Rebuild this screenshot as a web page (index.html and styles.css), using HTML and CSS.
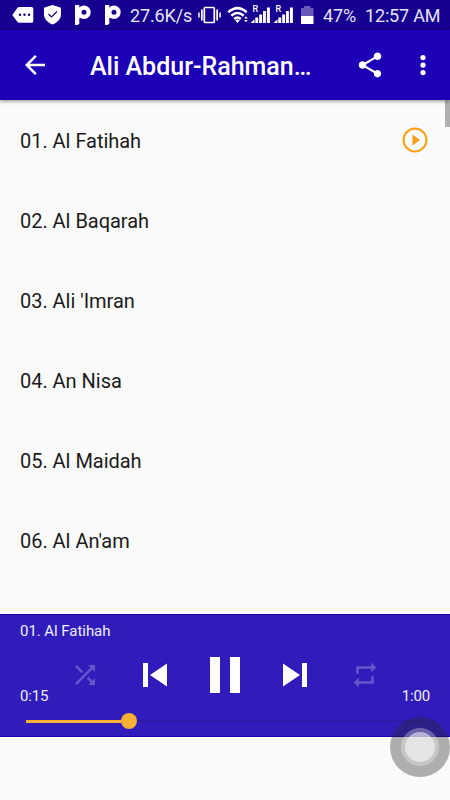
FILE: index.html
```html
<!DOCTYPE html>
<html lang="en">
<head>
<meta charset="utf-8">
<title>Ali Abdur-Rahman</title>
<link rel="stylesheet" href="styles.css">
</head>
<body>
<div class="screen">
  <div class="status">
    <svg class="notices" viewBox="0 0 130 30" fill="#fff">
      <path d="M12.300 15l5-7Q18 7 19.300 7H31.500Q33.300 7 33.300 8.800V20.900Q33.300 22.800 31.500 22.800H19.300Q18 22.800 17.300 21.800z"/>
      <g fill="#16008f"><circle cx="20" cy="14.800" r="1.200"/><circle cx="24.500" cy="14.800" r="1.200"/><circle cx="29" cy="14.800" r="1.200"/></g>
      <path d="M52.500 5l8.500 2.800v6.400c0 4.800-3.500 8.200-8.500 10.200-5-2-8.500-5.400-8.500-10.200V7.800z"/>
      <path d="M48.500 14l3 3 5.500-5.500" fill="none" stroke="#16008f" stroke-width="1.200"/>
      <g id="pay"><path d="M75 5h4.300v19l-2 1H75z"/><circle cx="84" cy="12.300" r="4.600" fill="none" stroke="#fff" stroke-width="4.200"/><path d="M78 9h3v9h-3z"/></g>
      <use href="#pay" x="30"/>
    </svg>
    <span class="speed">27.6K/s</span>
    <svg class="radios" viewBox="194 0 125 30" fill="#fff">
      <rect x="204.300" y="7.500" width="10" height="15" rx="1" fill="none" stroke="#fff" stroke-width="1.700"/>
      <path d="M201 9.500h1.700v11H201zM198.200 12.500h1.500v5h-1.500zM216.300 9.500h1.700v11h-1.700zM219.300 12.500h1.500v5h-1.500z"/>
      <g fill="none" stroke="#fff" stroke-width="2.500"><path d="M228.300 12.300Q237.500 4 246.700 12.300"/><path d="M231.300 15.800Q237.500 10.200 243.700 15.800"/><path d="M234.200 19Q237.500 16 240.800 19"/></g>
      <path d="M235.300 20.300q2.200-1.800 4.400 0l-2.200 2.700zM244.200 18.500l1.800-2.200 1.800 2.200zM244.200 20l1.800 2.200 1.800-2.200z"/>
      <g id="signal"><path d="M250.500 23l4-3.800V23zM255.300 17.500h2.900V23h-2.900zM259.200 14.500h2.900V23h-2.900zM263 11h2.900V23H263zM266.900 7.500h3V23h-3z"/><text x="252.600" y="12" class="roam">R</text></g>
      <use href="#signal" x="23"/>
      <path d="M304 6h6.500v2h3v8h-12.500V8h3z" opacity=".35"/><path d="M301 16h12.500v8H301z"/>
    </svg>
    <span class="percent">47%</span>
    <span class="clock">12:57 AM</span>
  </div>
  <header class="appbar">
    <svg class="icon" viewBox="0 0 24 24"><path d="M20 11H7.830l5.590-5.590L12 4l-8 8 8 8 1.410-1.410L7.830 13H20v-2z"/></svg>
    <h1>Ali Abdur-Rahman…</h1>
    <svg class="icon share" viewBox="0 0 24 24"><path d="M18 16.080c-.76 0-1.440.3-1.960.77L8.910 12.700c.05-.23.09-.46.09-.7s-.04-.47-.09-.7l7.050-4.110c.54.5 1.250.81 2.040.81 1.660 0 3-1.340 3-3s-1.340-3-3-3-3 1.340-3 3c0 .24.04.47.09.7L8.040 9.810C7.500 9.310 6.790 9 6 9c-1.660 0-3 1.340-3 3s1.340 3 3 3c.79 0 1.500-.31 2.040-.81l7.120 4.160c-.05.21-.08.43-.08.65 0 1.610 1.310 2.920 2.920 2.920s2.920-1.310 2.920-2.920-1.310-2.920-2.920-2.920z"/></svg>
    <svg class="icon more" viewBox="0 0 24 24"><circle cx="12" cy="6" r="2.100"/><circle cx="12" cy="12" r="2.100"/><circle cx="12" cy="18" r="2.100"/></svg>
  </header>
  <main class="list">
    <div class="row"><span>01. Al Fatihah</span>
      <svg class="playing" viewBox="0 0 24 24"><path d="M10 16.500l6-4.500-6-4.500v9zM12 2C6.480 2 2 6.480 2 12s4.480 10 10 10 10-4.480 10-10S17.520 2 12 2zm0 18.300c-4.600 0-8.300-3.700-8.300-8.300s3.700-8.300 8.300-8.300 8.300 3.700 8.300 8.300-3.700 8.300-8.300 8.300z"/></svg></div>
    <div class="row"><span>02. Al Baqarah</span></div>
    <div class="row"><span>03. Ali 'Imran</span></div>
    <div class="row"><span>04. An Nisa</span></div>
    <div class="row"><span>05. Al Maidah</span></div>
    <div class="row"><span>06. Al An'am</span></div>
    <div class="scrollbar"></div>
  </main>
  <section class="player">
    <div class="track">01. Al Fatihah</div>
    <div class="deck">
      <span class="time">0:15</span>
      <div class="controls">
        <svg class="icon dim" viewBox="0 0 24 24"><path d="M10.590 9.170L5.410 4 4 5.410l5.170 5.170 1.420-1.410zM14.500 4l2.040 2.040L4 18.590 5.410 20 17.960 7.460 20 9.500V4h-5.500zm.33 9.410l-1.410 1.410 3.130 3.130L14.500 20H20v-5.500l-2.040 2.040-3.130-3.130z"/></svg>
        <svg class="skip" viewBox="0 0 24 24"><path d="M0 0h5v24H0zM7 12L24 .5v23z"/></svg>
        <svg class="pause" viewBox="0 0 30 36"><path d="M0 0h10v36H0zM20 0h10v36H20z"/></svg>
        <svg class="skip" viewBox="0 0 24 24"><path d="M19 0h5v24h-5zM17 12L0 .5v23z"/></svg>
        <svg class="icon dim" viewBox="0 0 24 24"><path d="M7 7h10v3l4-4-4-4v3H5v6h2V7zm10 10H7v-3l-4 4 4 4v-3h12v-6h-2v4z"/></svg>
      </div>
      <span class="time end">1:00</span>
    </div>
    <div class="seek"><div class="elapsed"></div><div class="thumb"></div><div class="rest"></div></div>
  </section>
  <div class="assist"><div class="assist-core"></div></div>
</div>
</body>
</html>
```
FILE: styles.css
```css
* { box-sizing: border-box; }
body { margin: 0; font-family: Roboto, "Liberation Sans", sans-serif; }
svg { display: block; flex: none; }
.screen {
  position: relative;
  width: 450px;
  height: 800px;
  overflow: hidden;
  display: flex;
  flex-direction: column;
  background: #fafafa;
}
.status {
  flex: none;
  height: 30px;
  display: flex;
  align-items: center;
  background: #16008f;
  color: #e6e4f5;
  font-size: 18px;
  line-height: 30px;
  white-space: nowrap;
  padding-top: 2px;
}
.status svg { margin-top: -2px; }
.notices { width: 130px; height: 30px; }
.speed { width: 64px; letter-spacing: -.15px; }
.radios { width: 125px; height: 30px; }
.roam { font-size: 9px; font-weight: 500; }
.percent { width: 42px; padding-left: 4px; margin-right: 4px; letter-spacing: -.1px; }
.clock { letter-spacing: -.17px; }
.appbar {
  flex: none;
  z-index: 1;
  height: 70px;
  display: flex;
  align-items: center;
  padding-left: 20px;
  background: #1c00b5;
  color: #fff;
  box-shadow: 0 1px 4px rgba(0, 0, 0, .45);
}
.icon { width: 30px; height: 30px; fill: #fff; }
h1 {
  margin: 4px 0 0 40px;
  width: 265px;
  font-size: 25px;
  line-height: 32px;
  font-weight: 500;
  white-space: nowrap;
}
.more { margin-left: 22.500px; }
.list { position: relative; height: 514px; flex: none; }
.row {
  height: 80px;
  display: flex;
  align-items: center;
  justify-content: space-between;
  padding: 0 20px;
  font-size: 20px;
  letter-spacing: -.03px;
  color: #1a1a1a;
}
.row span { padding-top: 2px; }
.playing { width: 30px; height: 30px; fill: #f8a010; }
.scrollbar {
  position: absolute;
  top: 0;
  right: 0;
  width: 5px;
  height: 27px;
  background: #b0b0b0;
}
.player {
  flex: none;
  height: 123px;
  display: flex;
  flex-direction: column;
  background: #301cba;
  border-top: 1px solid #1400a8;
  border-bottom: 1px solid #1400a8;
  color: #f0eefb;
  font-size: 15px;
}
.track { height: 31px; line-height: 33px; padding-left: 20px; letter-spacing: -.05px; }
.deck { height: 60px; display: flex; align-items: flex-end; padding: 0 20px; }
.time { width: 30px; line-height: 20px; letter-spacing: -.15px; }
.end { text-align: right; }
.controls {
  width: 350px;
  height: 60px;
  display: grid;
  grid-template-columns: repeat(5, 70px);
  place-items: center;
}
.controls svg { fill: #fff; margin-top: -2px; }
.controls .dim { fill: #6657cb; }
.skip { width: 24px; height: 24px; }
.pause { width: 30px; height: 36px; }
.seek { height: 30px; display: flex; align-items: center; padding: 0 26px; }
.elapsed { width: 95px; height: 3px; background: #f9ae35; }
.thumb { width: 16px; height: 16px; border-radius: 50%; background: #f9ae35; }
.rest { flex: 1; height: 2px; background: #2d1ba5; }
.assist {
  position: absolute;
  left: 390px;
  top: 717px;
  width: 60px;
  height: 60px;
  border-radius: 50%;
  background: rgba(40, 40, 40, .36);
  display: flex;
  align-items: center;
  justify-content: center;
}
.assist-core {
  width: 38px;
  height: 38px;
  border: 4px solid rgba(255, 255, 255, .3);
  border-radius: 50%;
  background: rgba(255, 255, 255, .42) padding-box;
  box-shadow: inset 0 0 0 15px rgba(255, 255, 255, .42);
}
```
